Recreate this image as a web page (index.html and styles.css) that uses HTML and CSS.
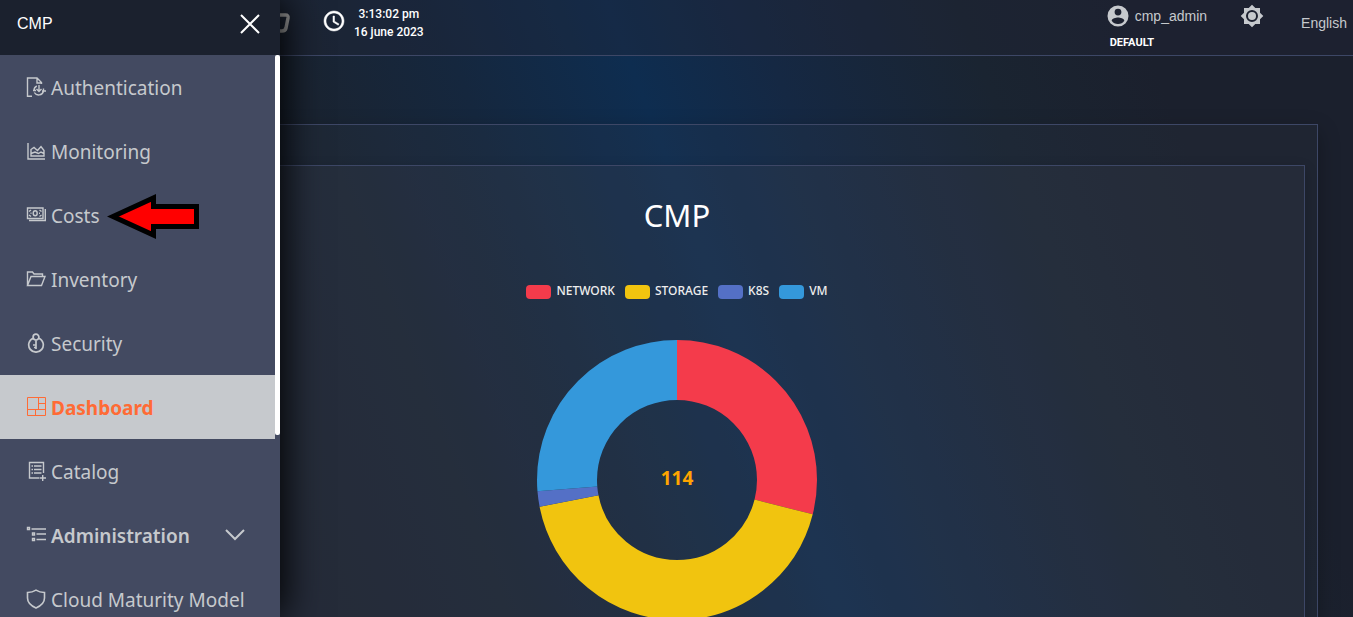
FILE: index.html
```html
<!DOCTYPE html>
<html lang="en">
<head>
<meta charset="utf-8">
<title>CMP Dashboard</title>
<link rel="stylesheet" href="styles.css">
</head>
<body>
<div class="app">
  <header class="topbar">
    <svg class="brand" width="30" height="22" viewBox="0 0 30 22" aria-hidden="true"><path d="M4 3h19.500q3 0 2.500 3l-2 10q-.7 3-4 3H6" fill="none" stroke="#a5a5a5" stroke-width="3.500"/></svg>
    <div class="clock">
      <svg width="24" height="24" viewBox="0 0 24 24" fill="#fff" stroke="#fff" stroke-width=".5" aria-hidden="true"><path d="M12 2C6.500 2 2 6.500 2 12s4.500 10 10 10 10-4.500 10-10S17.500 2 12 2zm0 18c-4.400 0-8-3.600-8-8s3.600-8 8-8 8 3.600 8 8-3.600 8-8 8zm.5-13H11v6l5.200 3.200.8-1.300-4.500-2.700z"/></svg>
      <div class="clock-text"><div>3:13:02 pm</div><div>16 june 2023</div></div>
    </div>
    <div class="user">
      <button class="user-button" type="button">
        <svg width="24" height="24" viewBox="0 0 24 24" fill="#c6c9cd" aria-hidden="true"><path d="M12 1.500A10.500 10.500 0 1 0 12 22.500 10.500 10.500 0 1 0 12 1.500zm0 3.200a3.400 3.400 0 1 1 0 6.800 3.400 3.400 0 0 1 0-6.800zM12 20a7.400 7.400 0 0 1-6.300-3.300c0-2.100 4.200-3.200 6.300-3.200s6.300 1.100 6.300 3.200A7.400 7.400 0 0 1 12 20z"/></svg>
        <span>cmp_admin</span>
      </button>
      <div class="tenant">DEFAULT</div>
    </div>
    <button class="theme" type="button" aria-label="Toggle theme">
      <svg width="24" height="24" viewBox="0 0 24 24" fill="#c6c9cd" aria-hidden="true"><path fill-rule="evenodd" d="M20 8.700V4h-4.700L12 .7 8.700 4H4v4.700L.7 12 4 15.300V20h4.700l3.300 3.300 3.300-3.300H20v-4.700l3.300-3.300zM12 18a6 6 0 1 1 0-12 6 6 0 0 1 0 12z"/><circle cx="12" cy="12" r="4"/></svg>
    </button>
    <button class="language" type="button">English</button>
  </header>

  <main class="content">
    <section class="board">
      <article class="widget">
        <h1 class="widget-title">CMP</h1>
        <ul class="legend">
          <li><span class="swatch network"></span>NETWORK</li>
          <li><span class="swatch storage"></span>STORAGE</li>
          <li><span class="swatch k8s"></span>K8S</li>
          <li><span class="swatch vm"></span>VM</li>
        </ul>
        <div class="donut"><span>114</span>
          <svg width="280" height="280" viewBox="-140 -140 280 280" fill="none" stroke-width="60" aria-hidden="true">
            <g transform="rotate(-90)">
              <circle r="110" pathLength="114" stroke="#f43b4b" stroke-dasharray="33 81"/>
              <circle r="110" pathLength="114" stroke="#f1c40f" stroke-dasharray="49 65" stroke-dashoffset="-33"/>
              <circle r="110" pathLength="114" stroke="#5470c6" stroke-dasharray="2 112" stroke-dashoffset="-82"/>
              <circle r="110" pathLength="114" stroke="#3498db" stroke-dasharray="30 84" stroke-dashoffset="-84"/>
            </g>
          </svg>
        </div>
      </article>
    </section>
  </main>

  <aside class="drawer">
    <div class="drawer-head">
      <span>CMP</span>
      <button class="close" type="button" aria-label="Close menu"><svg width="20" height="20" viewBox="0 0 20 20" stroke="#fff" stroke-width="2" aria-hidden="true"><path d="M1 1l18 18M19 1L1 19"/></svg></button>
    </div>
    <nav class="menu">
      <a href="#"><svg class="icon" viewBox="0 0 20 20"><path d="M6 19.300H1.500V1H11l4.500 4.500V7M11 1v5h4.500M13 8v6.500M10.500 12l2.500 2.500 2.500-2.500M10.800 9A5 5 0 0 0 8 13.500M7 13.500h3M8.300 15.500a5 5 0 0 0 9.200-1.500M16 14h4M17.500 11.500V14"/></svg>Authentication</a>
      <a href="#"><svg class="icon" viewBox="0 0 20 20"><path d="M2 2v16h17M5 15V8.500L8 6.500l3.500 3 3.500-4 3 4V15zM5 12.500l4-1.500 3.500 1.500L15 11l3 1.500"/></svg>Monitoring</a>
      <a href="#"><svg class="icon" viewBox="0 0 20 20"><path d="M1.500 3h15.500v10.500H1.500zM3 15.500h16.300V4M9.200 5.800c-1.500 0-2 1-2 2.500s.5 2.500 2 2.500 2-1 2-2.500-.5-2.500-2-2.500zM3 6.500L5 5M3 10L5 11.500M15.500 6.500l-2-1.500M15.500 10l-2 1.500M4.500 8.300h1M13 8.300h1"/></svg>Costs</a>
      <a href="#"><svg class="icon" viewBox="0 0 20 20"><path d="M1.500 16.500V3h5l1.500 2h8.500v2.500M1.500 16.500L5 7.500h14l-3.500 9z"/></svg>Inventory</a>
      <a href="#"><svg class="icon" viewBox="0 0 20 20"><path stroke-width="1.700" d="M7 5.200a7.300 7.300 0 1 0 6 0M10 1.200a2.900 2.900 0 1 1 0 5.800 2.900 2.900 0 0 1 0-5.800zM10 7v9M10 12H7M10 14.500H8"/></svg>Security</a>
      <a href="#" class="active" aria-current="page"><svg class="icon" viewBox="0 0 20 20"><path stroke-width="1" d="M1.500 .5h18v18h-18zM12.500 .5v12M12.500 6.500h7M1.500 12.500h18M9.500 12.500v6"/></svg>Dashboard</a>
      <a href="#"><svg class="icon" viewBox="0 0 20 20"><path d="M13 17H3.500V1.500h14V12M5.500 5H7M8 5h7.500M5.500 8.500H7M8 8.500h7.500M5.500 12H7M8 12h7.500M13.500 17H20M16.700 14v6"/></svg>Catalog</a>
      <a href="#" class="group"><svg class="icon" viewBox="0 0 20 20"><path d="M1.500 2.500h2v2h-2zM6.500 8h2v2h-2zM6.500 13.500h2v2h-2zM5.500 4H20M10.500 9H20M10.500 14.500H20"/></svg>Administration<svg class="chevron" width="20" height="12" viewBox="0 0 20 12" aria-hidden="true"><path d="M1 1l9 9 9-9"/></svg></a>
      <a href="#"><svg class="icon" viewBox="0 0 20 20"><path stroke-width="1.600" d="M10 1.200C7.500 2.800 4.500 3.500 1.500 3.500v5.500c0 5 4 8 8.500 10 4.500-2 8.500-5 8.500-10V3.500c-3 0-6-.7-8.500-2.300z"/></svg>Cloud Maturity Model</a>
    </nav>
    <div class="scroll-thumb"></div>
    <svg class="pointer" width="94" height="48" viewBox="0 0 94 48" aria-hidden="true"><path d="M6 23.500L46.500 5v8.500h43v20h-43V42z" fill="#f00" stroke="#000" stroke-width="5"/></svg>
  </aside>
</div>
</body>
</html>
```
FILE: styles.css
```css
* { box-sizing: border-box; }

body {
  margin: 0;
  background: #1b202d;
  font-family: "Liberation Sans", Arial, sans-serif;
  color: #fff;
}

button {
  border: 0;
  padding: 0;
  background: none;
  color: inherit;
  font: inherit;
}

svg { display: block; flex: none; }

.app {
  position: relative;
  display: flex;
  flex-direction: column;
  height: 100vh;
  overflow: hidden;
  background: linear-gradient(69deg, #1b202d 20%, #1a2432 32%, #15273e 42%, #0e2d50 53%, #152843 62%, #1a2431 75%, #1b202d 86%);
}

.topbar {
  flex: none;
  display: flex;
  align-items: flex-start;
  height: 56px;
  padding: 0 6px 0 262px;
  border-bottom: 1px solid #3d4766;
  background: rgba(33, 37, 55, .35);
}

.brand { margin-top: 12px; }

.clock {
  display: flex;
  gap: 8px;
  margin: 5px auto 0 30px;
}

.clock svg { margin-top: 4px; }

.clock-text {
  font-family: Roboto, sans-serif;
  font-size: 12px;
  font-weight: 500;
  line-height: 18px;
  text-align: center;
}

.user { margin-right: 33px; padding-top: 4px; }

.user-button {
  display: flex;
  align-items: center;
  gap: 5px;
  color: #c6c9cd;
  font-size: 14px;
}

.tenant {
  margin: 8px 0 0 4px;
  font-family: Roboto, sans-serif;
  font-size: 11px;
  font-weight: 700;
  line-height: 14px;
}

.theme { margin: 4px 37px 0 0; }

.language {
  margin-top: 15px;
  color: #c6c9cd;
  font-size: 14px;
}

.content {
  flex: 1;
  display: flex;
  padding: 68px 35px 0 36px;
}

.board {
  flex: 1;
  display: flex;
  padding: 40px 12px 0;
  border: 1px solid #3d4766;
  border-bottom: 0;
  background: rgba(67, 70, 90, .12);
  box-shadow: 0 8px 20px rgba(0, 0, 0, .3);
}

.widget {
  flex: 1;
  display: flex;
  flex-direction: column;
  align-items: center;
  border: 1px solid #3d4766;
  border-bottom: 0;
  background: rgba(67, 70, 86, .2);
  box-shadow: 0 4px 12px rgba(0, 0, 0, .2);
  font-family: "Open Sans", "Noto Sans", sans-serif;
}

.widget-title {
  margin: 29px 0 0;
  font-family: "Noto Sans", sans-serif;
  font-size: 31px;
  font-weight: 400;
  line-height: 40px;
}

.legend {
  display: flex;
  gap: 10px;
  margin: 47px 0 0;
  padding: 0;
  list-style: none;
  color: #eee;
  font-family: "Noto Sans", sans-serif;
  font-size: 12px;
  font-weight: 500;
  line-height: 18px;
}

.legend li { display: flex; align-items: center; gap: 5px; }

.swatch { width: 25px; height: 14px; margin-top: 2px; border-radius: 4px; }
.network { background: #f43b4b; }
.storage { background: #f1c40f; }
.k8s { background: #5470c6; }
.vm { background: #3498db; }

.donut {
  display: grid;
  place-items: center;
  margin-top: 40px;
}

.donut > * { grid-area: 1 / 1; }

.donut span {
  padding-bottom: 4px;
  color: #ffa500;
  font-size: 19px;
  font-weight: 700;
}

.drawer {
  position: absolute;
  inset: 0 auto 0 0;
  width: 280px;
  overflow: visible;
  background: #434a61;
  box-shadow: 4px 0 36px #000;
}

.drawer-head {
  display: flex;
  align-items: center;
  justify-content: space-between;
  height: 55px;
  padding: 0 20px 8px 17px;
  background: #1b212e;
  font-size: 16px;
}

.menu {
  margin-right: 5px;
  font-family: "Noto Sans", "Open Sans", sans-serif;
  font-size: 19px;
}

.menu a {
  display: flex;
  align-items: center;
  gap: 5px;
  height: 64px;
  padding: 2px 30px 0 26px;
  color: #c6c9cd;
  text-decoration: none;
  white-space: nowrap;
}

.icon {
  width: 20px;
  height: 20px;
  margin-bottom: 2px;
  fill: none;
  stroke: currentColor;
  stroke-width: 1.4;
}

.menu .active {
  background: #c6c9cd;
  color: #ff6b35;
  font-weight: 700;
}

.menu .group { font-weight: 600; }

.chevron {
  margin: 0 0 2px auto;
  fill: none;
  stroke: currentColor;
  stroke-width: 2;
}

.scroll-thumb {
  position: absolute;
  top: 55px;
  right: 0;
  width: 5px;
  height: 380px;
  border-radius: 2px;
  background: #fff;
}

.pointer {
  position: absolute;
  top: 193px;
  left: 107px;
}
```
